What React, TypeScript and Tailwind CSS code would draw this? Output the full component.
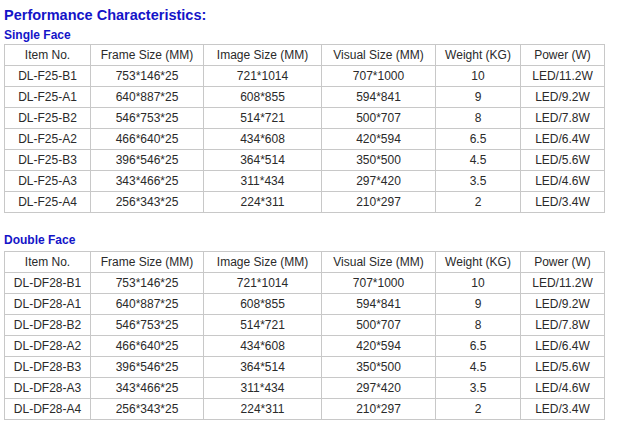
import React from "react";

const headers = ["Item No.", "Frame Size (MM)", "Image Size (MM)", "Visual Size (MM)", "Weight (KG)", "Power (W)"];
const widths = [86, 113, 118, 114, 85, 84];

const base = [
  ["B1", "753*146*25", "721*1014", "707*1000", "10", "LED/11.2W"],
  ["A1", "640*887*25", "608*855", "594*841", "9", "LED/9.2W"],
  ["B2", "546*753*25", "514*721", "500*707", "8", "LED/7.8W"],
  ["A2", "466*640*25", "434*608", "420*594", "6.5", "LED/6.4W"],
  ["B3", "396*546*25", "364*514", "350*500", "4.5", "LED/5.6W"],
  ["A3", "343*466*25", "311*434", "297*420", "3.5", "LED/4.6W"],
  ["A4", "256*343*25", "224*311", "210*297", "2", "LED/3.4W"],
];

function Table({ prefix }: { prefix: string }) {
  return (
    <table className="border-collapse table-fixed w-[601px] text-[12px] text-[#2a2a2a]">
      <colgroup>
        {widths.map((w, i) => (
          <col key={i} style={{ width: w }} />
        ))}
      </colgroup>
      <tbody>
        <tr>
          {headers.map((h) => (
            <td key={h} className="border border-[#c8c8c8] h-[21px] p-0 text-center leading-none">
              {h}
            </td>
          ))}
        </tr>
        {base.map((r) => (
          <tr key={r[0]}>
            {[prefix + r[0], ...r.slice(1)].map((c, i) => (
              <td key={i} className="border border-[#c8c8c8] h-[21px] p-0 text-center leading-none">
                {c}
              </td>
            ))}
          </tr>
        ))}
      </tbody>
    </table>
  );
}

export default function App() {
  return (
    <div className="w-[637px] h-[429px] bg-white pl-[4px] pt-[7px]" style={{ fontFamily: '"Liberation Sans", Arial, sans-serif' }}>
      <div className="text-[14.5px] font-bold text-[#1414c8] leading-[17px]">Performance Characteristics:</div>
      <div className="text-[12px] font-bold text-[#1414c8] leading-[15px] mt-[4px] mb-[1px]">Single Face</div>
      <Table prefix="DL-F25-" />
      <div className="text-[12px] font-bold text-[#1414c8] leading-[15px] mt-[20px] mb-[3px]">Double Face</div>
      <Table prefix="DL-DF28-" />
    </div>
  );
}
